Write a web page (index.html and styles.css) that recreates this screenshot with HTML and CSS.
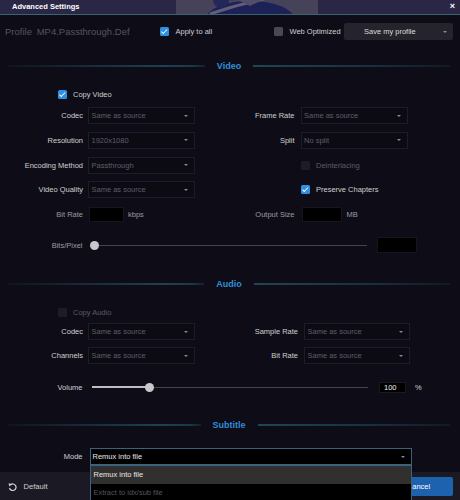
FILE: index.html
```html
<!DOCTYPE html>
<html>
<head>
<meta charset="utf-8">
<link rel="stylesheet" href="styles.css">
</head>
<body>
<div class="window">
  <div class="titlebar">
    <svg class="deco" width="460" height="14" viewBox="0 0 460 14">
      <rect x="0" y="0" width="460" height="14" fill="#2a2646"/>
      <rect x="176" y="0" width="142" height="14" fill="#46425a"/>
      <ellipse cx="250" cy="19" rx="44" ry="18" fill="#1c2158"/>
      <circle cx="221" cy="0" r="8" fill="#22285a"/>
      <path d="M210 14 Q236 5 264 -1" stroke="#625e7a" stroke-width="3" fill="none"/>
      <path d="M238 0 L262 0 L250 6 Z" fill="#524e6a"/>
    </svg>
    <span class="title">Advanced Settings</span>
    <span class="close">×</span>
  </div>

  <div class="toprow">
    <div class="profile"><span>Profile</span><span class="pname">MP4.Passthrough.Def</span></div>
    <div class="check"><span class="box on"></span><span>Apply to all</span></div>
    <div class="check"><span class="box off"></span><span>Web Optimized</span></div>
    <div class="savebtn"><span>Save my profile</span><i class="caret"></i></div>
  </div>

  <div class="sec s-video"><span class="ln l"></span><span class="t">Video</span><span class="ln r"></span></div>

  <div class="copyrow c-video"><span class="box on"></span><span>Copy Video</span></div>

  <div class="grid vgrid">
    <span class="lbl">Codec</span><div class="sel">Same as source<i class="caret"></i></div>
    <span class="lbl rl">Frame Rate</span><div class="sel">Same as source<i class="caret"></i></div>

    <span class="lbl">Resolution</span><div class="sel">1920x1080<i class="caret"></i></div>
    <span class="lbl rl">Split</span><div class="sel">No split<i class="caret"></i></div>

    <span class="lbl">Encoding Method</span><div class="sel">Passthrough<i class="caret"></i></div>
    <span class="lbl rl"></span><div class="check dis"><span class="box dbox"></span><span>Deinterlacing</span></div>

    <span class="lbl">Video Quality</span><div class="sel">Same as source<i class="caret"></i></div>
    <span class="lbl rl"></span><div class="check"><span class="box on"></span><span>Preserve Chapters</span></div>

    <span class="lbl dim">Bit Rate</span><div class="inrow"><span class="inp w35"></span><span class="dim">kbps</span></div>
    <span class="lbl rl dim">Output Size</span><div class="inrow"><span class="inp w40"></span><span class="dim unit2">MB</span></div>
  </div>

  <div class="slrow bprow">
    <span class="slbl dim">Bits/Pixel</span>
    <div class="slider bpslider"><span class="track"></span><span class="thumb bpthumb"></span></div>
    <span class="inp bpin"></span>
  </div>

  <div class="sec s-audio"><span class="ln l"></span><span class="t">Audio</span><span class="ln r"></span></div>

  <div class="copyrow c-audio dis"><span class="box dbox"></span><span>Copy Audio</span></div>

  <div class="grid agrid">
    <span class="lbl">Codec</span><div class="sel">Same as source<i class="caret"></i></div>
    <span class="lbl rl">Sample Rate</span><div class="sel">Same as source<i class="caret"></i></div>

    <span class="lbl">Channels</span><div class="sel">Same as source<i class="caret"></i></div>
    <span class="lbl rl">Bit Rate</span><div class="sel">Same as source<i class="caret"></i></div>
  </div>

  <div class="slrow volrow">
    <span class="slbl">Volume</span>
    <div class="slider volslider"><span class="track"></span><span class="fill" style="width:58px"></span><span class="thumb volthumb"></span></div>
    <span class="inp volin">100</span>
    <span class="pct">%</span>
  </div>

  <div class="sec s-sub"><span class="ln l"></span><span class="t">Subtitle</span><span class="ln r"></span></div>

  <div class="moderow">
    <span class="slbl">Mode</span>
    <div class="modesel">
      <span>Remux into file</span><i class="caret bc"></i>
      <div class="dlist">
        <div class="ditem on">Remux into file</div>
        <div class="ditem">Extract to idx/sub file</div>
      </div>
    </div>
  </div>

  <div class="footer">
    <div class="deflt">
      <svg class="ricon" width="9" height="9" viewBox="0 0 9 9">
        <path d="M2.7 2.6 A3.3 3.3 0 1 1 1.5 6" stroke="#d0d0d0" stroke-width="1.2" fill="none"/>
        <polygon points="0.6,1.2 4.2,2.2 1.3,4.6" fill="#d0d0d0"/>
      </svg>
      <span>Default</span>
    </div>
    <div class="cancel">Cancel</div>
  </div>
</div>
</body>
</html>
```

FILE: styles.css
```css
* { box-sizing: border-box; margin: 0; padding: 0; }
html, body { width: 460px; height: 500px; overflow: hidden; }
body {
  background: #0e0d17;
  font-family: "Liberation Sans", Arial, sans-serif;
  font-size: 7.5px;
  color: #cfcfcf;
}
.window { position: relative; display: flex; flex-direction: column; height: 500px; }

/* title bar */
.titlebar {
  position: relative; flex: none; height: 15px;
  border-bottom: 1px solid #3b6473; background: #2a2646; overflow: hidden;
}
.deco { position: absolute; left: 0; top: 0; }
.title {
  position: relative; display: block; padding-left: 12px; line-height: 14px;
  font-weight: bold; color: #fff;
}
.close {
  position: absolute; right: 5px; top: 0; line-height: 13px;
  font-weight: bold; color: #fff; font-size: 9px;
}

/* top row */
.toprow {
  flex: none; display: grid; grid-template-columns: 155px 114px 70px 109px;
  margin: 8px 0 0 5px; height: 17px; align-items: center;
}
.profile { font-size: 9.5px; color: #55545e; white-space: nowrap; overflow: hidden; }
.pname { margin-left: 4.7px; }
.check { display: flex; align-items: center; gap: 6.5px; white-space: nowrap; }
.box { position: relative; flex: none; width: 9px; height: 9px; border-radius: 1.5px; background: #4a4951; }
.box.on { background: #2f8fe0; }
.box.on::after {
  content: ""; position: absolute; left: 3px; top: 1px; width: 2px; height: 4.5px;
  border: solid #fff; border-width: 0 1.3px 1.3px 0; transform: rotate(45deg);
}
.box.dbox { background: #1e1d27; }
.dis { color: #5c5b65; }
.savebtn {
  position: relative; height: 17px; border-radius: 2px; background: #25242c;
  color: #dcdcdc; line-height: 17px; padding-left: 20px;
}
.caret {
  position: absolute; right: 6px; top: 50%; margin-top: -1px; width: 0; height: 0;
  border-left: 2.2px solid transparent; border-right: 2.2px solid transparent;
  border-top: 2.4px solid #8a8a92;
}

/* section heads */
.sec { flex: none; display: flex; align-items: center; height: 10px; padding: 0 10px 0 8px; }
.sec .ln { flex: 1; height: 2px; }
.sec .l { background: linear-gradient(to right, #10151f, #1d4253 80%, #193848 94%, #112230); }
.sec .r { background: linear-gradient(to right, #1f4656, #17303f 60%, #121a25); }
.sec .t { padding: 0 12px; color: #2f8dd6; font-weight: bold; font-size: 9px; }
.s-video { margin-top: 21px; }
.s-audio { margin-top: 26px; }
.s-sub { margin-top: 27.5px; }

/* copy rows */
.copyrow { flex: none; display: flex; align-items: center; gap: 6px; height: 9px; padding-left: 58px; }
.c-video { margin-top: 19px; }
.c-audio { margin-top: 19px; }

/* grids */
.grid { flex: none; display: grid; grid-auto-rows: 17px; align-items: center; }
.vgrid { grid-template-columns: 88px 107px 105.5px 107px; row-gap: 7.8px; margin-top: 8px; }
.agrid { grid-template-columns: 88px 107px 109px 106px; row-gap: 7px; margin-top: 6.5px; }
.lbl { text-align: right; padding-right: 5px; white-space: nowrap; }
.lbl.rl { padding-right: 6px; }
.dim { color: #9a9aa2; }
.sel {
  position: relative; height: 17px; line-height: 15px; padding-left: 2.5px;
  border: 1px solid #1d1c27; background: #0c0b14; color: #5f5e68; white-space: nowrap;
}
.inrow { display: flex; align-items: center; gap: 4px; padding-left: 1px; }
.inp { display: block; height: 15px; background: #000; border: 1px solid #16151d; flex: none; }
.w35 { width: 35px; }
.w40 { width: 40px; }
.unit2 { margin-left: 1px; }

/* slider rows */
.slrow { flex: none; display: flex; align-items: center; }
.slbl { width: 82.5px; text-align: right; flex: none; }
.slider { position: relative; height: 9px; flex: none; }
.track { position: absolute; left: 0; right: 0; top: 4px; height: 1px; background: #45444c; }
.fill { position: absolute; left: 0; top: 3.5px; height: 2px; background: #bdbdc2; }
.thumb { position: absolute; top: 0; width: 9px; height: 9px; border-radius: 50%; background: #c8c8cc; }
.bprow { height: 15.5px; margin-top: 14.3px; }
.bpslider { width: 273px; margin-left: 11.5px; }
.bpthumb { left: -4.5px; }
.bpin { width: 40px; height: 15.5px; margin-left: 9.7px; }
.volrow { height: 11px; margin-top: 17.2px; }
.volslider { width: 276px; margin-left: 9.2px; }
.volthumb { left: 53.8px; }
.volin { width: 27px; height: 11px; margin-left: 11.3px; color: #f0f0f0; line-height: 9px; padding-left: 4px; border-color: #1a1920; }
.pct { margin-left: 9px; }

/* mode */
.moderow { flex: none; display: flex; align-items: center; height: 17px; margin-top: 18.3px; position: relative; z-index: 5; }
.modesel {
  position: relative; width: 321.5px; height: 17px; margin-left: 7.5px;
  background: #000; border: 1px solid #38627e; color: #e6e6e6; line-height: 15px; padding-left: 1.5px;
}
.caret.bc { border-top-color: #7d86c0; right: 6px; }
.dlist {
  position: absolute; left: -1px; top: 16px; width: 321.5px; height: 40px;
  background: #000; border: 1px solid #38627e; border-bottom: none;
}
.ditem { height: 17px; line-height: 17px; padding-left: 2.5px; color: #55545c; }
.ditem.on { background: #32302f; color: #e6e6e6; height: 17.5px; }

/* footer */
.footer {
  flex: none; margin-top: auto; height: 28px; background: #1b1a24;
  display: flex; align-items: center; justify-content: space-between; padding: 0 7px 0 8px;
}
.deflt { display: flex; align-items: center; gap: 6.5px; color: #d0d0d0; font-size: 7.6px; }
.ricon { display: block; }
.cancel {
  width: 69px; height: 19px; border-radius: 2px; background: #1d62ae;
  color: #fff; text-align: center; line-height: 19px;
}
```
